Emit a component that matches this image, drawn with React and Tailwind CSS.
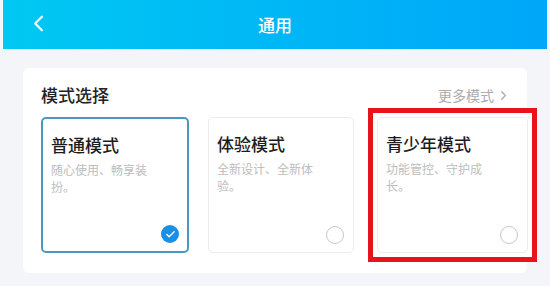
import { Check, ChevronLeft, ChevronRight } from "lucide-react";

const modes = [
  { title: "普通模式", desc: "随心使用、畅享装扮。", selected: true, w: "w-[148px]" },
  { title: "体验模式", desc: "全新设计、全新体验。", selected: false, w: "w-[146px]" },
  { title: "青少年模式", desc: "功能管控、守护成长。", selected: false, marked: true, w: "w-[151px]" },
];

function ModeCard({ mode }) {
  const card = (
    <div
      className={
        "relative h-[136px] rounded-[5px] bg-white px-[8px] pt-[13px] " +
        mode.w +
        " " +
        (mode.selected ? "border-2 border-[#4b97c0]" : "border border-[#ececec]")
      }
    >
      <div className="text-[17px] leading-[26px] font-medium text-[#1c1c1c]">{mode.title}</div>
      <p className="mt-[3px] pr-[18px] text-[12px] leading-[17px] text-[#bdbdbd]">{mode.desc}</p>
      {mode.selected ? (
        <div className="absolute right-[8px] bottom-[8px] flex h-[18px] w-[18px] items-center justify-center rounded-full bg-[#1a8fe8]">
          <Check className="h-[11px] w-[11px] text-white" strokeWidth={3} />
        </div>
      ) : (
        <div className="absolute right-[9px] bottom-[8px] h-[18px] w-[18px] rounded-full border-[1.5px] border-[#c8c8c8]" />
      )}
    </div>
  );

  if (mode.marked) {
    return <div className="-my-[9px] border-[5px] border-[#e8141c] bg-white p-[4px]">{card}</div>;
  }
  return card;
}

export default function App() {
  return (
    <div
      className="h-[286px] w-[550px] overflow-hidden bg-[#f4f5f9] px-[3px]"
      style={{ fontFamily: '"Noto Sans CJK SC", "Noto Sans", sans-serif' }}
    >
      {/* 顶部栏 */}
      <header className="relative flex h-[49px] items-center justify-center bg-gradient-to-r from-[#00c8f2] to-[#00a6f9]">
        <ChevronLeft className="absolute left-[22px] top-[10px] h-[27px] w-[27px] text-white" strokeWidth={2} />
        <h1 className="text-[17px] font-medium text-white">通用</h1>
      </header>

      {/* 模式选择 */}
      <main className="pl-[20px] pt-[19px]">
        <div className="h-[205px] w-[504px] rounded-[6px] bg-white pl-[18px] pt-[14px]">
          <div className="flex items-center justify-between pr-[16px]">
            <h2 className="text-[17px] leading-[26px] font-medium text-[#222]">模式选择</h2>
            <div className="flex items-center gap-[2px] text-[14px] text-[#ababab]">
              更多模式
              <ChevronRight className="h-[15px] w-[15px]" strokeWidth={2} />
            </div>
          </div>
          <div className="mt-[9px] flex items-start gap-[19px]">
            {modes.map((m) => (
              <div key={m.title} className={m.marked ? "-ml-[5px] flex" : "flex"}>
                <ModeCard mode={m} />
              </div>
            ))}
          </div>
        </div>
      </main>
    </div>
  );
}
